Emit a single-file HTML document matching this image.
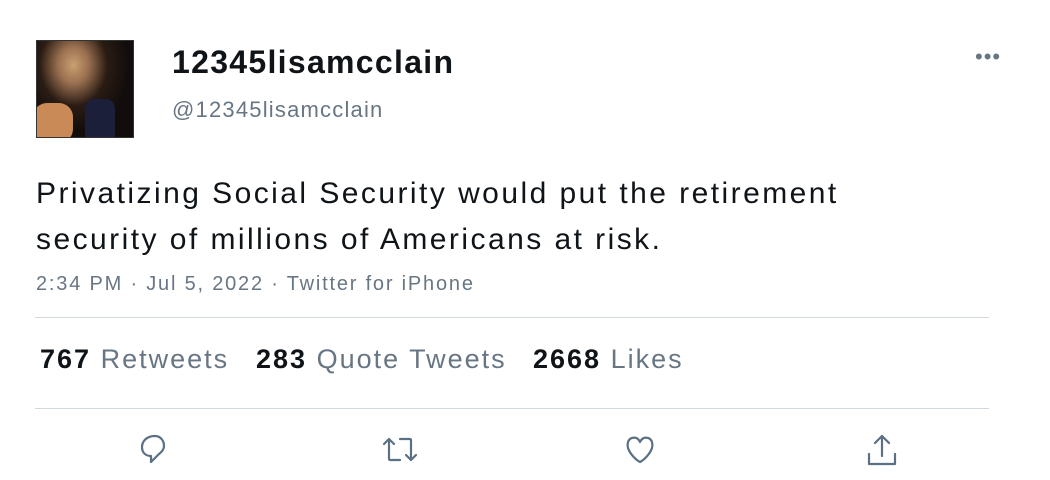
<!DOCTYPE html>
<html><head><style>
body{margin:0;background:#fff;width:1050px;height:480px;position:relative;overflow:hidden;font-family:"Liberation Sans",Arial,Helvetica,sans-serif}
.a{position:absolute;white-space:nowrap}
.g{color:#687684}
.hr{position:absolute;left:35px;width:954px;height:1px;background:#cfd9de}
svg{position:absolute}
</style></head><body>
<div class="a" style="left:36px;top:40px;width:98px;height:98px;background:radial-gradient(ellipse at 38% 25%,#c9a070 0,#9a7050 18%,#2a1c14 40%,#120d0c 65%);border:1px solid #333;box-sizing:border-box;overflow:hidden">
<div style="position:absolute;left:48px;top:58px;width:30px;height:40px;background:#1c1f3a;border-radius:10px 10px 0 0"></div>
<div style="position:absolute;left:-4px;top:62px;width:40px;height:40px;background:#c98a58;border-radius:14px"></div>
</div>
<div class="a" style="left:172px;top:44px;font-size:32px;font-weight:bold;color:#0f1419;letter-spacing:1.3px">12345lisamcclain</div>
<div class="a g" style="left:172px;top:97px;font-size:22px;letter-spacing:1.2px">@12345lisamcclain</div>
<div class="a" style="left:975px;top:44px;font-size:22px;color:#687684;letter-spacing:1px">•••</div>
<div class="a" style="left:36px;top:171px;font-size:30px;line-height:46px;color:#0f1419;letter-spacing:2.45px">Privatizing Social Security would put the retirement<br>security of millions of Americans at risk.</div>
<div class="a g" style="left:36px;top:273px;font-size:20px;letter-spacing:1.8px">2:34 PM · Jul 5, 2022 · Twitter for iPhone</div>
<div class="hr" style="top:317px"></div>
<div class="a" style="left:40px;top:344px;font-size:27px;color:#0f1419;letter-spacing:2px"><b>767</b> <span class="g">Retweets</span></div>
<div class="a" style="left:256px;top:344px;font-size:27px;color:#0f1419;letter-spacing:2px"><b>283</b> <span class="g">Quote Tweets</span></div>
<div class="a" style="left:533px;top:344px;font-size:27px;color:#0f1419;letter-spacing:2px"><b>2668</b> <span class="g">Likes</span></div>
<div class="hr" style="top:408px"></div>
<svg style="left:137px;top:432px" width="36" height="36" viewBox="0 0 36 36" fill="none" stroke="#5b7083" stroke-width="2.2" stroke-linejoin="round"><path d="M18 4C10 4 5 9 5 15c0 6 4 9 9 9h0v6l8-8c4-3 5-6 5-8 0-6-4-10-9-10z"/></svg>
<svg style="left:380px;top:432px" width="40" height="36" viewBox="0 0 40 36" fill="none" stroke="#5b7083" stroke-width="2.2" stroke-linecap="round" stroke-linejoin="round"><path d="M9 27V7M4 12l5-5 5 5M9 27h0c0 1 1 1 1 1h10M31 8v20M26 23l5 5 5-5M31 8c0-1-1-1-1-1H20"/></svg>
<svg style="left:622px;top:432px" width="36" height="36" viewBox="0 0 36 36" fill="none" stroke="#5b7083" stroke-width="2.2" stroke-linejoin="round"><path d="M18 10c-2-4-5-5-8-4-4 1-5 6-4 10 2 6 8 12 12 14 4-2 10-8 12-14 1-4 0-9-4-10-3-1-6 0-8 4z"/></svg>
<svg style="left:864px;top:432px" width="36" height="36" viewBox="0 0 36 36" fill="none" stroke="#5b7083" stroke-width="2.2" stroke-linecap="round" stroke-linejoin="round"><path d="M18 4v20M11 11l7-7 7 7M5 22v10h26V22"/></svg>
</body></html>
